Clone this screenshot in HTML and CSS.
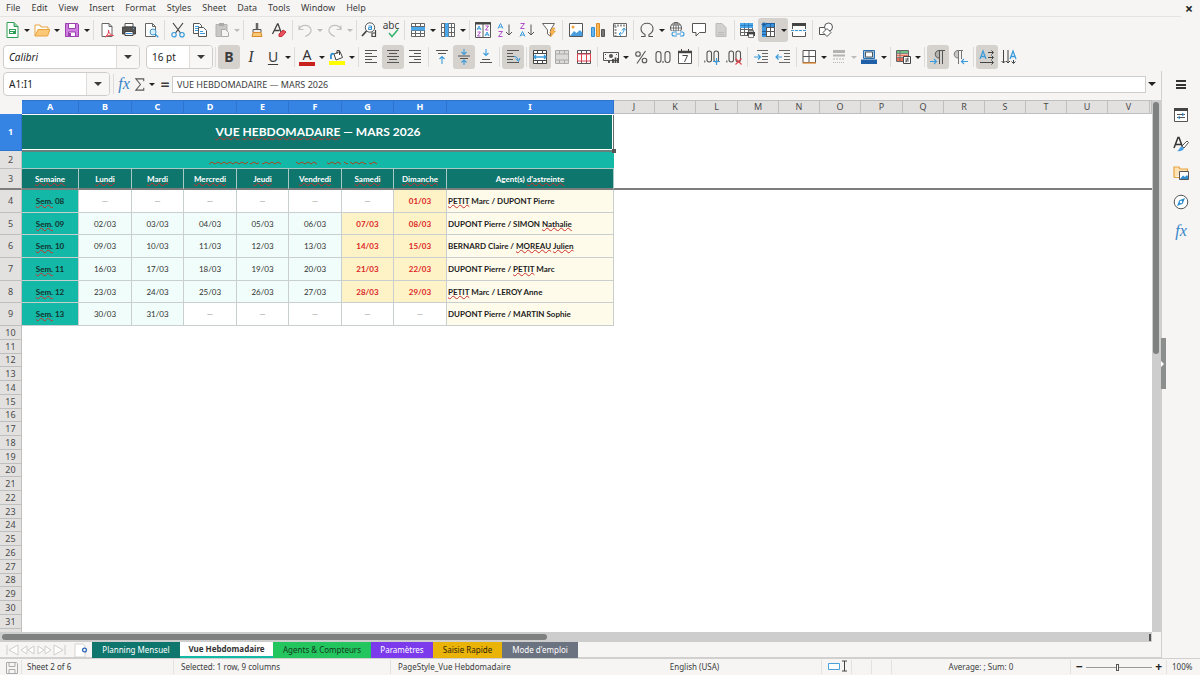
FILE: index.html
```html
<!DOCTYPE html>
<html lang="fr">
<head>
<meta charset="utf-8">
<title>Vue Hebdomadaire</title>
<link rel="stylesheet" href="styles.css">
</head>
<body>
<svg class="sprite" aria-hidden="true">
  <defs>
    <pattern id="zigzag" width="6" height="4" patternUnits="userSpaceOnUse"><path d="M0 3 3 1 6 3" fill="none" stroke="#a8431f" stroke-width="1"/></pattern>
    <symbol id="new" viewBox="0 0 16 16"><path d="M3 .5h7l4 4v11H3z" fill="#fff" stroke="#2f9e55"/><path d="M10 .5v4h4" fill="#8fd3a5" stroke="#2f9e55"/><path d="M5 7h7v5H5z" fill="#2f9e55"/><path d="M6 8.500h5M6 10.500h3" stroke="#fff"/></symbol>
    <symbol id="open" viewBox="0 0 16 16"><path d="M1 14V3h5l1 2h7v3" fill="#fff" stroke="#e8a33d"/><path d="M1 14 4 7.500h12L13.500 14z" fill="#fbc878" stroke="#e8a33d"/></symbol>
    <symbol id="save" viewBox="0 0 16 16"><path d="M1.500 1.500h12l1 1v12h-13z" fill="#cf7fe0" stroke="#9b3fb0"/><path d="M4.500 1.500h7v5h-7z" fill="#fff" stroke="#9b3fb0"/><path d="M4.500 10h7v4.500h-7z" fill="#fff" stroke="#9b3fb0"/><path d="M6 11v3" stroke="#9b3fb0" stroke-width="2"/></symbol>
    <symbol id="pdf" viewBox="0 0 16 16"><path d="M3 1.500h7l3 3v10H3z" fill="#fff" stroke="#666"/><path d="M10 1.500v3h3" fill="none" stroke="#666"/><path d="M6 15c3-2 4-5 3.500-7 0 3 2 5 5 5.500-3-.5-6 0-8.500 1.500z" fill="#fff" stroke="#e0424e"/></symbol>
    <symbol id="print" viewBox="0 0 16 16"><path d="M4 1.500h8V5H4z" fill="#fff" stroke="#555"/><path d="M1.500 5h13v7h-13z" fill="#555" stroke="#444"/><path d="M4 9.500h8v4H4z" fill="#fff" stroke="#444"/><path d="M5 11.500h6" stroke="#3a8fd6"/><path d="M12 6.500h1" stroke="#5cb3f0"/></symbol>
    <symbol id="preview" viewBox="0 0 16 16"><path d="M2.500 1.500h7l3 3v10h-10z" fill="#fff" stroke="#666"/><path d="M9.500 1.500v3h3" fill="none" stroke="#666"/><circle cx="10" cy="10" r="3" fill="#d9edfb" stroke="#3a9bdc"/><path d="m12.300 12.300 3 3" stroke="#3a9bdc" stroke-width="1.300"/></symbol>
    <symbol id="cut" viewBox="0 0 16 16"><path d="m3 1 7.500 10M13 1 5.500 11" stroke="#444" stroke-width="1.200"/><g fill="none" stroke="#3a9bdc" stroke-width="1.200"><circle cx="4" cy="12.700" r="2.200"/><circle cx="12" cy="12.700" r="2.200"/></g></symbol>
    <symbol id="copy" viewBox="0 0 16 16"><g fill="#fff" stroke="#555"><path d="M1.500 1.500h6l2 2v8h-8z"/><path d="M6.500 5.500h5l3 3v6h-8z"/></g><path d="M3 4.500h4M3 6.500h3M3 8.500h3M8 9.500h3M8 11.500h5" stroke="#3a9bdc"/></symbol>
    <symbol id="paste" viewBox="0 0 16 16"><path d="M2 2.500h11v12H2z" fill="#c9c7c5" stroke="#b5b3b1"/><path d="M5 1h5v3H5z" fill="#aaa"/><path d="M7.500 7.500h4l3 3v4h-7z" fill="#f6f5f4" stroke="#aaa"/></symbol>
    <symbol id="brush" viewBox="0 0 16 16"><path d="M8 1v6" stroke="#666" stroke-width="2.500"/><path d="M4 7.500h8v3H4z" fill="#eee" stroke="#555"/><path d="M4 10.500h8l1 4H3z" fill="#fbc878" stroke="#d88b2c"/></symbol>
    <symbol id="clear" viewBox="0 0 16 16"><path d="M1.500 12 6.500 2h.5l3 8M3.500 8.500h5" fill="none" stroke="#444" stroke-width="1.300"/><path d="m8 12 4-4 3 2-4 4.500H8z" fill="#e8505b" stroke="#c5303c"/></symbol>
    <symbol id="undo" viewBox="0 0 16 16"><path d="M2 3.500v4h4.500M2 7.500c2-5 10-6 12 0 1 3-3 6-6 7" fill="none" stroke="#c2c0be" stroke-width="1.200"/></symbol>
    <symbol id="redo" viewBox="0 0 16 16"><path d="M14 3.500v4H9.500M14 7.500c-2-5-10-6-12 0-1 3 3 6 6 7" fill="none" stroke="#c2c0be" stroke-width="1.200"/></symbol>
    <symbol id="find" viewBox="0 0 16 16"><circle cx="9" cy="5.500" r="4.700" fill="#fff" stroke="#555"/><path d="M5.500 9 1 14" stroke="#444" stroke-width="1.800"/><path d="M7.500 4h3v3.500h-3V5.700h3" fill="none" stroke="#2f8fd0"/><path d="M14.500 8v7M14.500 11h-3.500v3.500h3.500" fill="none" stroke="#444" stroke-width="1.200"/></symbol>
    <symbol id="check" viewBox="0 0 16 16"><path d="m6 11 3 3.500 6-7" fill="none" stroke="#37b46b" stroke-width="1.500"/></symbol>
    <symbol id="rows" viewBox="0 0 16 16"><path d="M1.500 1.500h13v13h-13z" fill="#fff"/><path d="M1.500 1.500h13v13h-13zM5.500 1v14M10.500 1v14M1 4.500h14M1 8.500h14M1 11.500h14" fill="none" stroke="#666"/><path d="M1 5h14v3.500H1z" fill="#4aa8ea"/></symbol>
    <symbol id="cols" viewBox="0 0 16 16"><path d="M1.500 1.500h13v13h-13z" fill="#fff"/><path d="M1.500 1.500h13v13h-13zM4.500 1v14M8.500 1v14M11.500 1v14M1 5.500h14M1 10.500h14" fill="none" stroke="#666"/><path d="M5 1h3.500v14H5z" fill="#4aa8ea"/></symbol>
    <symbol id="sort" viewBox="0 0 16 16"><path d="M.5.5h15v15H.5zM8 2v13" fill="#fff" stroke="#555"/><path d="M0 1.500h16" stroke="#444" stroke-width="2"/><path d="m2 8 2-4 2 4M2.700 6.800h2.700M10 14l2-4 2 4M10.700 12.800h2.700" fill="none" stroke="#3a9bdc"/><path d="M2.500 10h3L2.500 14h3M10.500 4h3L10.500 8h3" fill="none" stroke="#b04fc8"/></symbol>
    <symbol id="az" viewBox="0 0 16 16"><path d="m1 6.500 2.500-5 2.500 5M2 5h3" fill="none" stroke="#3a9bdc"/><path d="M1.500 9.500h4L1.500 14.500h4" fill="none" stroke="#b04fc8"/><path d="M12 2.500v10M9 10l3 3 3-3" fill="none" stroke="#555"/></symbol>
    <symbol id="za" viewBox="0 0 16 16"><path d="m1 14.500 2.500-5 2.500 5M2 13h3" fill="none" stroke="#3a9bdc"/><path d="M1.500 1.500h4L1.500 6.500h4" fill="none" stroke="#b04fc8"/><path d="M12 2.500v10M9 10l3 3 3-3" fill="none" stroke="#555"/></symbol>
    <symbol id="filter" viewBox="0 0 16 16"><path d="M1.500 1.500h12L9.500 8v6l-3-2V8z" fill="#fff" stroke="#666"/><path d="m11.500 6-3 5h2l-1 4 5-6h-2.500l2-3z" fill="#fbb654" stroke="#e5952b" stroke-width=".6"/></symbol>
    <symbol id="image" viewBox="0 0 16 16"><path d="M1.500 1.500h13v13h-13z" fill="#fff" stroke="#555"/><path d="m2 14 4-5 2.500 2L12 8l2.500 3v3z" fill="#4a9ee0"/><circle cx="5" cy="5" r="1.500" fill="#f0a63a"/></symbol>
    <symbol id="chart" viewBox="0 0 16 16"><path d="M1.500 5.500h3v9h-3z" fill="#68b5f0" stroke="#318dd0"/><path d="M6.500 1.500h3v13h-3z" fill="#fbb654" stroke="#e08f28"/><path d="M11.500 7.500h3v7h-3z" fill="#777" stroke="#555"/></symbol>
    <symbol id="pivot" viewBox="0 0 16 16"><path d="M1.500 1.500h13v13h-13z" fill="#fff" stroke="#666"/><path d="M2 3.500h12M3.500 4v10" stroke="#999" stroke-width="2" stroke-dasharray="2 1"/><path d="M7 12c4 0 5-2 5-5M10 8.500 12 6l2 2.500M9 10l-2 2 2 2" fill="none" stroke="#3a9bdc"/></symbol>
    <symbol id="omega" viewBox="0 0 16 16"><path d="M2 14.500h4v-2C3 11 2 9 2 6.500c0-7 12-7 12 0 0 2.500-1 4.500-4 6v2h4" fill="none" stroke="#555" stroke-width="1.100"/></symbol>
    <symbol id="link" viewBox="0 0 16 16"><circle cx="7" cy="6" r="5.500" fill="#fff" stroke="#555"/><path d="M1.500 6h11M7 .5v11M2.500 3h9M2.500 9h9" stroke="#555" stroke-width=".8"/><ellipse cx="7" cy="6" rx="2.500" ry="5.500" fill="none" stroke="#555" stroke-width=".8"/><path d="M2 9h14v6H2z" fill="#f6f5f4"/><path d="M8 14H5a2 2 0 0 1 0-4h3M11 10h2a2 2 0 0 1 0 4h-2M6.500 12h5.500" fill="none" stroke="#3a9bdc" stroke-width="1.100"/></symbol>
    <symbol id="comment" viewBox="0 0 16 16"><path d="M1.500 1.500h13v9H8.500L5 14v-3.500H1.500z" fill="#fff" stroke="#555"/></symbol>
    <symbol id="page" viewBox="0 0 16 16"><path d="M3 1.500h6l4 4v9H3z" fill="#d2d0ce" stroke="#bbb"/><path d="M5 10.500h6M5 12.500h6" stroke="#bbb"/></symbol>
    <symbol id="printarea" viewBox="0 0 16 16"><path d="M1.500 1.500h12v12h-12z" fill="#fff"/><path d="M1.500 1.500h12v12h-12zM5.500 1v13M9.500 1v13M1 4h13M1 7.500h13M1 10.500h13" fill="none" stroke="#666"/><path d="M1 1h13v5H1z" fill="#4aa8ea"/><path d="M1 3.500h13M5.500 1v5M9.500 1v5" stroke="#2a74b4" stroke-width=".7"/><path d="M8 10h8v4H8z" fill="#444"/><path d="M9.500 8.500h5V10h-5zM9.500 12h5v3.500h-5z" fill="#fff" stroke="#444" stroke-width=".7"/></symbol>
    <symbol id="freeze" viewBox="0 0 16 16"><path d="M1.500 1.500h13v13h-13z" fill="#fff"/><path d="M5.500 5v10M9.500 5v10M13.500 5v10M5 5.500h9M5 9.500h9M1 14.500h13" fill="none" stroke="#555"/><path d="M1 1h13v4H1zM1 1h4v14H1z" fill="#3a93dc"/><path d="M9.500 1v4M1 9.500h4M1 12.500h4M13.500 1v4M5 1.500h9" fill="none" stroke="#1f5fa0"/><path d="M3 0v5M.5 2.500h5M1.300.8l3.500 3.500M4.800.8 1.300 4.300" stroke="#1c5c98" stroke-width=".8"/></symbol>
    <symbol id="split" viewBox="0 0 16 16"><path d="M1.500 1.500h13v13h-13z" fill="#fff" stroke="#555"/><path d="M1 2.500h14" stroke="#444" stroke-width="3"/><path d="M0 8.500h16" stroke="#f6f5f4" stroke-width="3"/><path d="M0 8.500h16" stroke="#3a9bdc" stroke-dasharray="3 1"/></symbol>
    <symbol id="shapes" viewBox="0 0 16 16"><path d="M1.500 5.500h7v7h-7z" fill="#fff" stroke="#555"/><circle cx="10.500" cy="5" r="4" fill="#fff" stroke="#555"/><path d="m9 6.500 4 4-4 4-4-4z" fill="#fff" stroke="#555"/></symbol>
    <symbol id="left" viewBox="0 0 16 16"><path d="M2 1.500h12M2 4.500h7M2 7.500h12M2 10.500h7M2 13.500h12" stroke="#555"/></symbol>
    <symbol id="center" viewBox="0 0 16 16"><path d="M2 1.500h12M4 4.500h8M2 7.500h12M4 10.500h8M2 13.500h12" stroke="#555"/></symbol>
    <symbol id="right" viewBox="0 0 16 16"><path d="M2 1.500h12M7 4.500h7M2 7.500h12M7 10.500h7M2 13.500h12" stroke="#555"/></symbol>
    <symbol id="top" viewBox="0 0 16 16"><path d="M2 1.500h12M4 4.500h8" stroke="#555"/><path d="M8 15V8M5.500 10 8 7.500l2.500 2.500" fill="none" stroke="#3a9bdc" stroke-width="1.100"/></symbol>
    <symbol id="middle" viewBox="0 0 16 16"><path d="M2 7h12M4 9.500h8" stroke="#555"/><path d="M8 0v5M5.500 3 8 5.500 10.500 3M8 16v-5M5.500 13.500 8 11l2.500 2.500" fill="none" stroke="#3a9bdc" stroke-width="1.100"/></symbol>
    <symbol id="bottom" viewBox="0 0 16 16"><path d="M4 10.500h8M2 13.500h12" stroke="#555"/><path d="M8 0v6M5.500 4 8 6.500 10.500 4" fill="none" stroke="#3a9bdc" stroke-width="1.100"/></symbol>
    <symbol id="wrap" viewBox="0 0 16 16"><path d="M2 1.500h12M2 4.500h6M2 7.500h8M2 10.500h6M2 13.500h12" stroke="#555"/><path d="M9 7.500c3 0 4 2 4 4M10.500 9.500l3 3 1.500-3.500" fill="none" stroke="#3a9bdc"/></symbol>
    <symbol id="merge" viewBox="0 0 16 16"><path d="M1.500 1.500h13v13h-13z" fill="#fff"/><path d="M1.500 1.500h13v13h-13zM1 4.500h14M1 11.500h14M5.500 1v3M10.500 1v3M5.500 12v3M10.500 12v3" fill="none" stroke="#444"/><path d="M2 8h12M4 6 2 8l2 2M12 6l2 2-2 2" fill="none" stroke="#3a9bdc" stroke-width="1.300"/></symbol>
    <symbol id="mergeoff" viewBox="0 0 16 16"><path d="M1.500 1.500h13v13h-13z" fill="#dcdad8"/><path d="M1.500 1.500h13v13h-13zM1 5h14M1 11h14M5.500 1v4M10.500 1v4M5.500 11v4M10.500 11v4" fill="none" stroke="#aaa"/></symbol>
    <symbol id="unmerge" viewBox="0 0 16 16"><path d="M1.500 1.500h13v13h-13z" fill="#fff" stroke="#555"/><path d="M1 4.500h14M5.500 1v3M10.500 1v3M5.500 12v3M10.500 12v3" stroke="#555"/><path d="M1.500 5v7h13V5M5.500 5v7M10.500 5v7M1 5h14" fill="none" stroke="#e0424e"/></symbol>
    <symbol id="money" viewBox="0 0 16 16"><path d="M.5 3.500h15v8H.5z" fill="none" stroke="#555"/><circle cx="8" cy="7" r="2" fill="#555"/><path d="M2 5.500h1M13 5.500h1M2 9.500h1" stroke="#555"/><path d="M10 14v-4M12.500 14V8.500M15 14V9M6 14v-2" stroke="#444" stroke-width="1.800"/></symbol>
    <symbol id="date" viewBox="0 0 16 16"><path d="M1.500 2.500h13v12h-13z" fill="#fff" stroke="#555"/><path d="M1 3h14" stroke="#444" stroke-width="2.500"/><path d="M4.500 0v3M11.500 0v3" stroke="#444"/><path d="M5.500 6.500h5l-3 6.500" fill="none" stroke="#444"/></symbol>
    <symbol id="percent" viewBox="0 0 16 16"><g fill="none" stroke="#555" stroke-width="1.100"><circle cx="5" cy="5" r="2.300"/><circle cx="11.500" cy="11.500" r="2.300"/><path d="M12.500 2 4 14.500"/></g></symbol>
    <symbol id="number" viewBox="0 0 16 16"><g fill="none" stroke="#555" stroke-width="1.100"><rect x="1" y="2.500" width="5" height="11" rx="2.500"/><rect x="10" y="2.500" width="5" height="11" rx="2.500"/><path d="M8 12v2"/></g></symbol>
    <symbol id="adddec" viewBox="0 0 16 16"><g fill="none" stroke="#555" stroke-width="1.100"><rect x="3" y="2" width="4.500" height="11" rx="2.200"/><rect x="10" y="2" width="4.500" height="11" rx="2.200"/><path d="M.8 11.500v2"/></g><path d="M12.500 9v7M9 12.500h7" stroke="#3a9bdc" stroke-width="1.200"/></symbol>
    <symbol id="deldec" viewBox="0 0 16 16"><g fill="none" stroke="#555" stroke-width="1.100"><rect x="3" y="2" width="4.500" height="11" rx="2.200"/><rect x="10" y="2" width="4.500" height="11" rx="2.200"/><path d="M.8 11.500v2"/></g><path d="m9.500 9.500 6 6M15.500 9.500l-6 6" stroke="#e0424e" stroke-width="1.100"/></symbol>
    <symbol id="indent" viewBox="0 0 16 16"><path d="M4 1.500h11M9 4.500h6M9 7.500h6M9 10.500h6M4 13.500h11" stroke="#666"/><path d="M1 8h6M5 5.500 7.500 8 5 10.500" fill="none" stroke="#3a9bdc" stroke-width="1.200"/></symbol>
    <symbol id="outdent" viewBox="0 0 16 16"><path d="M4 1.500h11M9 4.500h6M9 7.500h6M9 10.500h6M4 13.500h11" stroke="#666"/><path d="M7 8H1M3.500 5.500 1 8l2.500 2.500" fill="none" stroke="#3a9bdc" stroke-width="1.200"/></symbol>
    <symbol id="borders" viewBox="0 0 16 16"><path d="M2 1.500h12.500v12H2zM8 1.500v12M2 7.500h12.500" fill="#fff" stroke="#555"/><path d="M1.500 14h13.500" stroke="#e08a35" stroke-width="1.300"/></symbol>
    <symbol id="lines" viewBox="0 0 16 16"><path d="M2 2.500h12" stroke="#b5b3b1" stroke-width="3"/><path d="M2 6.500h12" stroke="#b5b3b1" stroke-width="2"/><path d="M2 10h12" stroke="#b5b3b1" stroke-dasharray="2 1"/><path d="M2 13.500h12" stroke="#b5b3b1" stroke-dasharray="1 1"/></symbol>
    <symbol id="bordercolor" viewBox="0 0 16 16"><path d="M2.500 1.500h11v8h-11z" fill="#9fc8ea" stroke="#2a6fb0"/><path d="M4.500 3h7v5h-7z" fill="#fff" stroke="#555"/><path d="M0 10.500h16V15H0z" fill="#1f5fa8"/></symbol>
    <symbol id="cond" viewBox="0 0 16 16"><path d="M1.500 1.500h12v11h-12z" fill="#fff" stroke="#666"/><path d="M2 2h11v2H2z" fill="#6ec486"/><path d="M2 5.500h11v2H2zM2 9h6v3H2z" fill="#e8705b"/><path d="M5 1v11M1 4.500h12M1 8.500h12" stroke="#666" stroke-width=".8"/><path d="M8.500 7.500h7v7h-7z" fill="#fff" stroke="#444"/><path d="M10 10h4M10 12h4M13 8.500 11 13.500" stroke="#444" stroke-width=".8"/></symbol>
    <symbol id="ltr" viewBox="0 0 16 16"><path d="M9 9C4 9 4 1.500 9 1.500z" fill="#b5b2af"/><path d="M9 9C4 9 4 1.500 9 1.500h6M9.500 1.500V15M12.500 1.500V15" fill="none" stroke="#555"/><path d="M0 12.500h6M4 10l2.500 2.500L4 15" fill="none" stroke="#3a9bdc" stroke-width="1.100"/></symbol>
    <symbol id="rtl" viewBox="0 0 16 16"><path d="M6 9C1 9 1 1.500 6 1.500z" fill="#c9c6c3"/><path d="M6 9C1 9 1 1.500 6 1.500h5M6.500 1.500V15M9.500 1.500V10" fill="none" stroke="#777"/><path d="M16 12.500h-6M12 10l-2.500 2.500L12 15" fill="none" stroke="#3a9bdc" stroke-width="1.100"/></symbol>
    <symbol id="horiz" viewBox="0 0 16 16"><path d="M1 10 4 2l3 8M2 7.500h4" fill="none" stroke="#3a9bdc" stroke-width="1.300"/><path d="M9 3.500h5M12.500 1.500l2 2-2 2M9 8.500h5M12.500 6.500l2 2-2 2M1 13.500h13M12.500 11.500l2 2-2 2" fill="none" stroke="#444"/></symbol>
    <symbol id="vert" viewBox="0 0 16 16"><path d="M9 10 12 2l3 8M10 7.500h4" fill="none" stroke="#3a9bdc" stroke-width="1.300"/><path d="M2.500 1v13M.5 12l2 2 2-2M7 1v13M5 12l2 2 2-2M12.500 11v3M10.500 12.500l2 2 2-2" fill="none" stroke="#444"/></symbol>
    <symbol id="bucket" viewBox="0 0 16 16"><path d="m5 5 6-2.500 2.500 6L7 11z" fill="#fff" stroke="#444"/><path d="M8 5V1.500h2.500V6" fill="none" stroke="#444"/><path d="M5 5C2 4 1.500 6 2 10" fill="none" stroke="#2f8fd0" stroke-width="1.800"/><path d="M0 12h16v4H0z" fill="#ff0"/></symbol>
    <symbol id="props" viewBox="0 0 16 16"><path d="M1.500 1.500h13v13h-13z" fill="#fff" stroke="#555"/><path d="M1 2.500h14" stroke="#444" stroke-width="3"/><path d="M4 7.500h8M4 10.500h8" stroke="#555"/><path d="m9 6 2 1.500L9 9M7 9l-2 1.500L7 12" fill="none" stroke="#3a9bdc"/></symbol>
    <symbol id="styles" viewBox="0 0 16 16"><path d="m1 12 4-10.500h1L9.500 11M2.500 8.500H8" fill="none" stroke="#333" stroke-width="1.500"/><path d="m9 10 5-5 1.500 1.500L11 12z" fill="#fff" stroke="#555"/><path d="M4 15c2 0 2-4 5-4.500l2 2C10 15 7 15.500 4 15z" fill="#4aa0e4"/></symbol>
    <symbol id="gallery" viewBox="0 0 16 16"><path d="M1 12.500V2h5l1 2h7.500v2M1 12.500h5" fill="#fde2b6" stroke="#e8a33d" stroke-width="1.200"/><path d="M6.500 6.500h9v8h-9z" fill="#fff" stroke="#555"/><path d="m7 14 3-3.500 2 1.500 2-2 1 1.500V14z" fill="#2f8fd0"/></symbol>
    <symbol id="nav" viewBox="0 0 16 16"><circle cx="8" cy="8" r="6.800" fill="#fff" stroke="#555"/><path d="M12 4 9.700 9.700 4 12l2.300-5.700z" fill="#2f8fd0"/><circle cx="8" cy="8" r="1.200" fill="#fff"/></symbol>
    <symbol id="sigma" viewBox="0 0 12 16"><path d="M10 4.500V2H1.500l5 6-5 6H10v-2.500" fill="none" stroke="#555" stroke-width="1.100"/></symbol>
    <symbol id="disk" viewBox="0 0 16 16"><path d="M2.500 2.500h10l1 1v10h-11zM5 2.500h6v4H5zM5 9.500h6v4H5z" fill="none" stroke="#aaa"/></symbol>
  </defs>
</svg>

<div class="app">
  <header class="menubar">
    <nav class="menus" aria-label="Menu">
      <button>File</button><button>Edit</button><button>View</button><button>Insert</button><button>Format</button><button>Styles</button><button>Sheet</button><button>Data</button><button>Tools</button><button>Window</button><button>Help</button>
    </nav>
    <button class="close" aria-label="Close">×</button>
  </header>

  <div class="toolbar" role="toolbar" aria-label="Standard">
    <button class="tool" aria-label="New"><svg><use href="#new"/></svg></button><button class="drop" aria-label="New options"></button>
    <button class="tool" aria-label="Open"><svg><use href="#open"/></svg></button><button class="drop" aria-label="Recent files"></button>
    <button class="tool" aria-label="Save"><svg><use href="#save"/></svg></button><button class="drop" aria-label="Save options"></button>
    <span class="sep"></span>
    <button class="tool" aria-label="Export as PDF"><svg><use href="#pdf"/></svg></button>
    <button class="tool" aria-label="Print"><svg><use href="#print"/></svg></button>
    <button class="tool" aria-label="Print preview"><svg><use href="#preview"/></svg></button>
    <span class="sep"></span>
    <button class="tool" aria-label="Cut"><svg><use href="#cut"/></svg></button>
    <button class="tool" aria-label="Copy"><svg><use href="#copy"/></svg></button>
    <button class="tool" aria-label="Paste" disabled><svg><use href="#paste"/></svg></button><button class="drop" aria-label="Paste options" disabled></button>
    <span class="sep"></span>
    <button class="tool" aria-label="Clone formatting"><svg><use href="#brush"/></svg></button>
    <button class="tool" aria-label="Clear formatting"><svg><use href="#clear"/></svg></button>
    <span class="sep tight"></span>
    <button class="tool" aria-label="Undo" disabled><svg><use href="#undo"/></svg></button><button class="drop" aria-label="Undo list" disabled></button>
    <button class="tool" aria-label="Redo" disabled><svg><use href="#redo"/></svg></button><button class="drop" aria-label="Redo list" disabled></button>
    <span class="sep tight"></span>
    <button class="tool" aria-label="Find and replace"><svg><use href="#find"/></svg></button>
    <button class="tool spell" aria-label="Spelling"><span>abc</span><svg><use href="#check"/></svg></button>
    <span class="sep"></span>
    <button class="tool" aria-label="Row"><svg><use href="#rows"/></svg></button><button class="drop" aria-label="Row options"></button>
    <button class="tool" aria-label="Column"><svg><use href="#cols"/></svg></button><button class="drop" aria-label="Column options"></button>
    <span class="sep"></span>
    <button class="tool" aria-label="Sort"><svg><use href="#sort"/></svg></button>
    <button class="tool" aria-label="Sort ascending"><svg><use href="#az"/></svg></button>
    <button class="tool" aria-label="Sort descending"><svg><use href="#za"/></svg></button>
    <button class="tool" aria-label="AutoFilter"><svg><use href="#filter"/></svg></button>
    <span class="sep"></span>
    <button class="tool" aria-label="Insert image"><svg><use href="#image"/></svg></button>
    <button class="tool" aria-label="Insert chart"><svg><use href="#chart"/></svg></button>
    <button class="tool" aria-label="Pivot table"><svg><use href="#pivot"/></svg></button>
    <span class="sep"></span>
    <button class="tool" aria-label="Special character"><svg><use href="#omega"/></svg></button><button class="drop" aria-label="More characters"></button>
    <button class="tool" aria-label="Hyperlink"><svg><use href="#link"/></svg></button>
    <button class="tool" aria-label="Comment"><svg><use href="#comment"/></svg></button>
    <button class="tool" aria-label="Headers and footers" disabled><svg><use href="#page"/></svg></button>
    <span class="sep tight"></span>
    <button class="tool" aria-label="Print area"><svg><use href="#printarea"/></svg></button>
    <span class="pair"><button class="tool" aria-label="Freeze"><svg><use href="#freeze"/></svg></button><button class="drop" aria-label="Freeze options"></button></span>
    <button class="tool" aria-label="Split window"><svg><use href="#split"/></svg></button>
    <span class="sep"></span>
    <button class="tool" aria-label="Draw functions"><svg><use href="#shapes"/></svg></button>
  </div>

  <div class="toolbar format" role="toolbar" aria-label="Formatting">
    <div class="combo font"><input aria-label="Font name" value="Calibri"><button aria-label="Font list"></button></div>
    <div class="combo size"><input aria-label="Font size" value="16 pt"><button aria-label="Size list"></button></div>
    <span class="sep"></span>
    <button class="tool on bold" aria-label="Bold">B</button>
    <button class="tool italic" aria-label="Italic">I</button>
    <button class="tool under" aria-label="Underline">U</button><button class="drop" aria-label="Underline options"></button>
    <span class="sep tight"></span>
    <button class="tool color" aria-label="Font color">A</button><button class="drop" aria-label="Font colors"></button>
    <button class="tool" aria-label="Background color"><svg><use href="#bucket"/></svg></button><button class="drop" aria-label="Background colors"></button>
    <span class="sep tight"></span>
    <button class="tool" aria-label="Align left"><svg><use href="#left"/></svg></button>
    <button class="tool on" aria-label="Align center"><svg><use href="#center"/></svg></button>
    <button class="tool" aria-label="Align right"><svg><use href="#right"/></svg></button>
    <span class="sep"></span>
    <button class="tool" aria-label="Align top"><svg><use href="#top"/></svg></button>
    <button class="tool on" aria-label="Center vertically"><svg><use href="#middle"/></svg></button>
    <button class="tool" aria-label="Align bottom"><svg><use href="#bottom"/></svg></button>
    <span class="sep"></span>
    <button class="tool on" aria-label="Wrap text"><svg><use href="#wrap"/></svg></button>
    <span class="sep"></span>
    <button class="tool on" aria-label="Merge and center"><svg><use href="#merge"/></svg></button>
    <button class="tool" aria-label="Merge cells" disabled><svg><use href="#mergeoff"/></svg></button>
    <button class="tool" aria-label="Unmerge cells"><svg><use href="#unmerge"/></svg></button>
    <span class="sep"></span>
    <button class="tool" aria-label="Currency"><svg><use href="#money"/></svg></button><button class="drop" aria-label="Currencies"></button>
    <button class="tool" aria-label="Percent"><svg><use href="#percent"/></svg></button>
    <button class="tool" aria-label="Number"><svg><use href="#number"/></svg></button>
    <button class="tool" aria-label="Date"><svg><use href="#date"/></svg></button>
    <span class="sep"></span>
    <button class="tool" aria-label="Add decimal place"><svg><use href="#adddec"/></svg></button>
    <button class="tool" aria-label="Delete decimal place"><svg><use href="#deldec"/></svg></button>
    <span class="sep"></span>
    <button class="tool" aria-label="Increase indent"><svg><use href="#indent"/></svg></button>
    <button class="tool" aria-label="Decrease indent"><svg><use href="#outdent"/></svg></button>
    <span class="sep tight"></span>
    <button class="tool" aria-label="Borders"><svg><use href="#borders"/></svg></button><button class="drop" aria-label="Border options"></button>
    <button class="tool" aria-label="Border style" disabled><svg><use href="#lines"/></svg></button><button class="drop" aria-label="Border styles" disabled></button>
    <button class="tool" aria-label="Border color"><svg><use href="#bordercolor"/></svg></button><button class="drop" aria-label="Border colors"></button>
    <span class="sep tight"></span>
    <button class="tool" aria-label="Conditional formatting"><svg><use href="#cond"/></svg></button><button class="drop" aria-label="Conditional options"></button>
    <span class="sep"></span>
    <button class="tool on" aria-label="Left to right"><svg><use href="#ltr"/></svg></button>
    <button class="tool" aria-label="Right to left"><svg><use href="#rtl"/></svg></button>
    <span class="sep"></span>
    <button class="tool on" aria-label="Horizontal text"><svg><use href="#horiz"/></svg></button>
    <button class="tool" aria-label="Vertical text"><svg><use href="#vert"/></svg></button>
  </div>

  <div class="workspace">
    <main class="main">
      <div class="formula">
        <div class="combo name"><input aria-label="Name box" value="A1:I1"><button aria-label="Named ranges"></button></div>
        <span class="sep"></span>
        <button class="fx" aria-label="Function wizard">fx</button>
        <button class="sum" aria-label="Sum"><svg><use href="#sigma"/></svg></button><button class="drop" aria-label="Functions"></button>
        <button class="eq" aria-label="Formula">=</button>
        <input class="line" aria-label="Input line" value="VUE HEBDOMADAIRE — MARS 2026">
        <button class="drop large" aria-label="Expand input line"></button>
      </div>

      <div class="sheetarea">
        <div class="viewport">
          <table class="sheet">
            <colgroup><col class="w22"><col class="w57"><col class="w53"><col class="w52"><col class="w53"><col class="w52"><col class="w53"><col class="w52"><col class="w53"><col class="w167"><col class="w41"><col class="w41"><col class="w42"><col class="w41"><col class="w41"><col class="w41"><col class="w42"><col class="w41"><col class="w41"><col class="w41"><col class="w41"><col class="w41"><col class="w42"><col></colgroup>
            <thead>
              <tr><td class="corner"></td><th class="sel">A</th><th class="sel">B</th><th class="sel">C</th><th class="sel">D</th><th class="sel">E</th><th class="sel">F</th><th class="sel">G</th><th class="sel">H</th><th class="sel">I</th><th>J</th><th>K</th><th>L</th><th>M</th><th>N</th><th>O</th><th>P</th><th>Q</th><th>R</th><th>S</th><th>T</th><th>U</th><th>V</th><th></th></tr>
            </thead>
            <tbody class="frozen">
              <tr class="r1"><th class="sel">1</th><td class="title" colspan="9"><u>VUE</u> <u>HEBDOMADAIRE</u> — MARS 2026<span class="handle"></span></td><td class="rest" colspan="14"></td></tr>
              <tr class="r2"><th>2</th><td class="subtitle" colspan="9"><svg class="marks" viewBox="0 0 218 4"><path fill="url(#zigzag)" d="M0 0h39v4H0zM41 0h9v4h-9zM53 0h19v4H53zM87 0h21v4H87zM118 0h14v4h-14zM135 0h4v4h-4zM141 0h16v4h-16zM160 0h8v4h-8z"/></svg></td><td class="rest" colspan="14"></td></tr>
              <tr class="r3"><th>3</th><td><u>Semaine</u></td><td><u>Lundi</u></td><td><u>Mardi</u></td><td><u>Mercredi</u></td><td><u>Jeudi</u></td><td><u>Vendredi</u></td><td><u>Samedi</u></td><td><u>Dimanche</u></td><td>Agent(s) <u>d'astreinte</u></td><td class="rest" colspan="14"></td></tr>
            </tbody>
            <tbody class="weeks">
              <tr><th>4</th><td class="wk"><u>Sem.</u> 08</td><td class="no">—</td><td class="no">—</td><td class="no">—</td><td class="no">—</td><td class="no">—</td><td class="no">—</td><td class="we">01/03</td><td class="ag"><u>PETIT</u> Marc / DUPONT Pierre</td><td class="rest" colspan="14"></td></tr>
              <tr><th>5</th><td class="wk"><u>Sem.</u> 09</td><td>02/03</td><td>03/03</td><td>04/03</td><td>05/03</td><td>06/03</td><td class="we">07/03</td><td class="we">08/03</td><td class="ag">DUPONT Pierre / SIMON <u>Nathalie</u></td><td class="rest" colspan="14"></td></tr>
              <tr><th>6</th><td class="wk"><u>Sem.</u> 10</td><td>09/03</td><td>10/03</td><td>11/03</td><td>12/03</td><td>13/03</td><td class="we">14/03</td><td class="we">15/03</td><td class="ag">BERNARD Claire / <u>MOREAU</u> <u>Julien</u></td><td class="rest" colspan="14"></td></tr>
              <tr><th>7</th><td class="wk"><u>Sem.</u> 11</td><td>16/03</td><td>17/03</td><td>18/03</td><td>19/03</td><td>20/03</td><td class="we">21/03</td><td class="we">22/03</td><td class="ag">DUPONT Pierre / <u>PETIT</u> Marc</td><td class="rest" colspan="14"></td></tr>
              <tr><th>8</th><td class="wk"><u>Sem.</u> 12</td><td>23/03</td><td>24/03</td><td>25/03</td><td>26/03</td><td>27/03</td><td class="we">28/03</td><td class="we">29/03</td><td class="ag"><u>PETIT</u> Marc / LEROY Anne</td><td class="rest" colspan="14"></td></tr>
              <tr><th>9</th><td class="wk"><u>Sem.</u> 13</td><td>30/03</td><td>31/03</td><td class="no">—</td><td class="no">—</td><td class="no">—</td><td class="no">—</td><td class="no">—</td><td class="ag">DUPONT Pierre / MARTIN Sophie</td><td class="rest" colspan="14"></td></tr>
            </tbody>
            <tbody class="empty">
              <tr><th>10</th><td colspan="23"></td></tr><tr><th>11</th><td colspan="23"></td></tr><tr><th>12</th><td colspan="23"></td></tr><tr><th>13</th><td colspan="23"></td></tr><tr><th>14</th><td colspan="23"></td></tr><tr><th>15</th><td colspan="23"></td></tr><tr><th>16</th><td colspan="23"></td></tr><tr><th>17</th><td colspan="23"></td></tr><tr><th>18</th><td colspan="23"></td></tr><tr><th>19</th><td colspan="23"></td></tr><tr><th>20</th><td colspan="23"></td></tr><tr><th>21</th><td colspan="23"></td></tr><tr><th>22</th><td colspan="23"></td></tr><tr><th>23</th><td colspan="23"></td></tr><tr><th>24</th><td colspan="23"></td></tr><tr><th>25</th><td colspan="23"></td></tr><tr><th>26</th><td colspan="23"></td></tr><tr><th>27</th><td colspan="23"></td></tr><tr><th>28</th><td colspan="23"></td></tr><tr><th>29</th><td colspan="23"></td></tr><tr><th>30</th><td colspan="23"></td></tr><tr><th>31</th><td colspan="23"></td></tr><tr><th></th><td colspan="23"></td></tr>
            </tbody>
          </table>
        </div>
        <div class="vscroll"><span></span></div>
      </div>
      <div class="hscroll"><span></span><i></i></div>

      <div class="tabs" role="tablist">
        <button class="first" aria-label="Scroll tabs"><svg viewBox="0 0 60 12"><path d="M1 1v10M12 1 3 6l9 5V1M21 2l-6 4 6 4V2M28 2l-6 4 6 4V2M32 2v8l6-4zM39 2v8l6-4zM48 1v10l9-5zM59 1v10" fill="#fff" stroke="#cfcdcb"/></svg></button>
        <button class="add" aria-label="Add sheet"><svg viewBox="0 0 14 14"><path d="M1 1h8l2 2v11H1z" fill="#fff" stroke="#d6d4d2"/><circle cx="10.500" cy="7" r="1.900" fill="#fff" stroke="#2a62b8" stroke-width="1.300"/></svg></button>
        <button class="tab t1" role="tab">Planning Mensuel</button><button class="tab t2" role="tab" aria-selected="true">Vue Hebdomadaire</button><button class="tab t3" role="tab">Agents &amp; Compteurs</button><button class="tab t4" role="tab">Paramètres</button><button class="tab t5" role="tab">Saisie Rapide</button><button class="tab t6" role="tab">Mode d'emploi</button>
      </div>
    </main>

    <aside class="sidebar">
      <button class="burger" aria-label="Sidebar settings"></button>
      <button aria-label="Properties"><svg><use href="#props"/></svg></button>
      <button aria-label="Styles"><svg><use href="#styles"/></svg></button>
      <button aria-label="Gallery"><svg><use href="#gallery"/></svg></button>
      <button aria-label="Navigator"><svg><use href="#nav"/></svg></button>
      <button class="fx" aria-label="Functions">fx</button>
      <button class="grip" aria-label="Show sidebar"></button>
    </aside>
  </div>

  <footer class="status">
    <span class="doc"><svg><use href="#disk"/></svg></span>
    <span>Sheet 2 of 6</span>
    <span class="pad">Selected: 1 row, 9 columns</span>
    <span class="pad">PageStyle_Vue Hebdomadaire</span>
    <span class="mid">English (USA)</span>
    <span class="mode"><svg viewBox="0 0 20 12"><path d="M1.500 3.500h11v6h-11z" fill="#fff" stroke="#4aa0dc"/><path d="M15 1h2.500H20M17.500 1v10M15 11h5" stroke="#444" fill="none"/></svg></span>
    <span></span><span></span>
    <span class="mid">Average: ; Sum: 0</span>
    <label class="zoom"><b>−</b><input type="range" min="0" max="100" value="48" aria-label="Zoom"><b>+</b></label>
    <span>100%</span>
  </footer>
</div>
</body>
</html>
```
FILE: styles.css
```css
* { box-sizing: border-box; }
body { margin: 0; background: #f6f5f4; color: #3c3c3c; font: 9px/12px "Noto Sans", sans-serif; }
button, input { margin: 0; padding: 0; border: 0; background: none; color: inherit; font: inherit; }
input { min-width: 0; }
svg { display: block; width: 16px; height: 16px; }
.sprite { position: absolute; width: 0; height: 0; }
.app { display: flex; flex-direction: column; height: 100vh; overflow: hidden; }

/* menu and toolbars */
.menubar { display: flex; justify-content: space-between; height: 17px; }
.menus { display: flex; gap: 11px; flex: 1; margin-right: 16px; padding-left: 6px; border-bottom: 1px solid #e6e4e2; }
.close { width: 16px; margin-right: 3px; margin-left: -16px; font-size: 14px; font-weight: 700; color: #222; }
.toolbar { display: flex; align-items: center; height: 27px; padding: 0 0 1px 1px; }
.toolbar.format { padding-left: 3px; }
.tool { display: flex; align-items: center; justify-content: center; flex: none; width: 22px; height: 24px; border-radius: 3px; font-size: 14px; }
.on, .pair { background: #d5d1cd; border-radius: 3px; }
.pair { display: flex; }
.drop { flex: none; display: flex; align-items: center; justify-content: center; width: 8px; height: 24px; color: #222; }
.drop::before, .combo button::before { content: ""; border: 3px solid transparent; border-top: 3px solid currentColor; border-bottom: 0; }
.drop:disabled { color: #bbb; }
.sep { flex: none; width: 5px; height: 20px; background: linear-gradient(#dedcda, #dedcda) center / 1px 100% no-repeat; }
.sep.tight { width: 4px; }
.spell { display: grid; }
.spell > * { grid-area: 1 / 1; }
.spell span { align-self: start; font-size: 10px; line-height: 14px; }
.bold { font-weight: 700; }
.italic { font-family: "Liberation Serif", serif; font-style: italic; font-size: 16px; }
.under { text-decoration: underline; text-underline-offset: 2px; }
.color { height: 18px; line-height: 14px; align-items: start; border-bottom: 4px solid #c9211e; border-radius: 0; width: 16px; margin: 0 3px; color: #333; }
.combo { display: flex; height: 24px; border: 1px solid #cfccc9; border-radius: 4px; background: #fff; overflow: hidden; font-size: 10px; }
.combo input { flex: 1; padding-left: 5px; color: #222; }
.combo button { display: flex; align-items: center; justify-content: center; width: 23px; border-left: 1px solid #dedcda; background: #f8f7f6; }
.combo button::before, .large::before { border-width: 4px 4px 0; }
.font { width: 137px; margin-right: 6px; }
.font input { font-style: italic; }
.size { width: 67px; }
.name { width: 107px; }

.workspace { display: flex; flex: 1; min-height: 0; }
.main { display: flex; flex-direction: column; flex: 1; min-width: 0; }
.formula { display: flex; align-items: center; height: 29px; padding: 0 5px 3px 3px; }
.fx { color: #3584c8; font: italic 16px/16px "Liberation Serif", serif; }
.formula .sep { margin: 0 1px; }
.formula .fx { width: 14px; }
.sum { width: 12px; margin-left: 3px; }
.sum svg { width: 12px; height: 15px; }
.formula .drop { margin: 0 4px 0 2px; }
.eq { width: 10px; margin-right: 2px; font-size: 16px; font-weight: 600; }
.line { flex: 1; height: 17px; padding-left: 4px; border: 1px solid #cfccc9; background: #fff; }
.formula .large { margin: 0 0 0 2px; }

/* spreadsheet */
.sheetarea { display: flex; flex: 1; min-height: 0; }
.viewport { flex: 1; min-width: 0; overflow: hidden; background: #fff; }
.sheet { width: 100%; border-collapse: separate; border-spacing: 0; table-layout: fixed; }
.sheet th, .sheet td { padding: 0; overflow: hidden; white-space: nowrap; text-align: center; }
.sheet th { border-right: 1px solid #bfbfbf; border-bottom: 1px solid #bfbfbf; background: #e2e1e0; color: #4a4a4a; font-weight: 400; }
.sheet thead th { height: 14px; border-top: 1px solid #bfbfbf; line-height: 12px; }
.sheet th.sel { border-color: #2f74cc; background: #3584e4; color: #fff; font-weight: 700; }
.sheet td.corner { background: #f6f5f4; }
.w22 { width: 22px; } .w41 { width: 41px; } .w42 { width: 42px; } .w52 { width: 52px; } .w53 { width: 53px; } .w57 { width: 57px; } .w167 { width: 167px; }
.sheet u { text-decoration: underline wavy #c9302c 1px; text-decoration-skip-ink: none; text-underline-offset: 0; }
.r1 { height: 37px; } .r2 { height: 18px; } .r3 { height: 21px; }
.sheet .title { position: relative; overflow: visible; padding-bottom: 3px; border-top: 1px solid #fff; background: #0f766e; box-shadow: inset 0 -1px #66817d, inset 0 -2px #fff, inset -1px 0 #5d6b69, inset -2px 0 #fff; color: #fff; font: 700 12px/18px Lato, sans-serif; }
.handle { position: absolute; right: -2px; bottom: -2px; width: 4px; height: 4px; background: #555; }
.subtitle { border-top: 1px solid #66817d; border-bottom: 1px solid #a9c9c5; background: #14b8a6; }
.marks { width: 218px; height: 4px; margin: 5px auto 0; }
.frozen .r3 td { border-right: 1px solid #a9c9c5; border-bottom: 2px solid #7d7d7d; background: #0f766e; color: #fff; font: 700 8px/12px Lato, sans-serif; }
.frozen .r3 .rest { border-right: 0; background: #fff; }
.r3 th { border-bottom: 2px solid #7d7d7d; }
.weeks tr { height: 23px; }
.weeks tr:nth-child(3n + 2) { height: 22px; }
.weeks td { border-right: 1px solid #c9cfce; border-bottom: 1px solid #c9cfce; background: #f0fdfa; color: #333; font: 8px/12px Lato, sans-serif; }
.weeks .no { background: #fff; color: #999; }
.weeks .wk { background: #14b8a6; color: #12312e; font-weight: 700; }
.weeks .we { background: #fef3c7; color: #dc2626; font-weight: 700; }
.sheet .weeks .ag { padding-left: 1px; background: #fffbeb; color: #1c1c1c; font-weight: 700; text-align: left; }
.weeks .rest { border: 0; background: #fff; }
.empty tr { height: 14px; }
.empty th { line-height: 12px; }
.empty tr:nth-child(4n + 3) { height: 13px; }

/* scroll bars and tabs */
.vscroll { width: 9px; padding: 2px 2px 0 1px; background: #cdcdcd; }
.vscroll span { display: block; height: 47.5%; border-radius: 3px; background: #7e8180; }
.hscroll { display: flex; align-items: center; justify-content: space-between; height: 10px; margin-right: 9px; padding: 0 1px 0 2px; background: #cdcdcd; }
.hscroll span { width: 47.4%; height: 6px; border-radius: 3px; background: #7e8180; }
.hscroll i { width: 2px; height: 7px; background: #555; }
.tabs { display: flex; height: 16px; border-bottom: 1px solid #d2d0ce; font-size: 8px; }
.first { width: 60px; margin-left: 6px; }
.first svg { width: 60px; height: 12px; }
.add { width: 14px; margin: 0 4px 0 8px; }
.add svg { width: 14px; height: 14px; }
.tab { height: 16px; color: #fff; }
.t1 { width: 88px; background: #0f766e; }
.t2 { width: 93px; border-bottom: 2px solid #14b8a6; background: #fff; color: #333; font-weight: 700; }
.t3 { width: 98px; background: #22c55e; color: #153a20; }
.t4 { width: 62px; background: #7c3aed; }
.t5 { width: 69px; background: #eab308; color: #2e2504; }
.t6 { width: 76px; background: #6b7280; }

.sidebar { position: relative; display: flex; flex-direction: column; align-items: center; gap: 13px; width: 39px; padding-top: 6px; border-left: 1px solid #d2d0ce; }
.sidebar button { height: 16px; }
.sidebar .burger { width: 10px; height: 9px; margin: 3px 0 5px; border-top: 2px solid #333; border-bottom: 2px solid #333; background: linear-gradient(#333, #333) center / 100% 2px no-repeat; }
.sidebar .grip { position: absolute; left: -1px; top: 267px; width: 5px; height: 51px; background: #8c8f8e; }
.grip::before { content: ""; display: block; width: 0; border: 3px solid transparent; border-left-color: #fff; border-right: 0; }

.status { display: grid; grid-template-columns: 22px 152fr 217fr 177fr 254fr 30fr 20fr 20fr 179fr 96px 33px; align-items: center; height: 17px; border-top: 1px solid #d2d0ce; font-size: 8px; }
.status > * { height: 14px; padding-left: 5px; border-right: 1px solid #e4e2e0; line-height: 14px; white-space: nowrap; }
.status > :nth-child(4), .status > :last-child { border-right: 0; }
.status .doc { padding-left: 4px; }
.status .pad { padding-left: 7px; }
.status .mid { padding: 0; text-align: center; }
.mode svg { width: 20px; height: 12px; }
.status .zoom { display: flex; align-items: center; gap: 3px; padding-right: 4px; color: #222; }
.zoom b { font-size: 12px; }
.zoom input { flex: 1; height: 8px; appearance: none; background: linear-gradient(#999, #999) center / 100% 1px no-repeat; }
.zoom input::-webkit-slider-thumb { appearance: none; width: 3px; height: 7px; border: 1px solid #555; background: #fff; }
```
